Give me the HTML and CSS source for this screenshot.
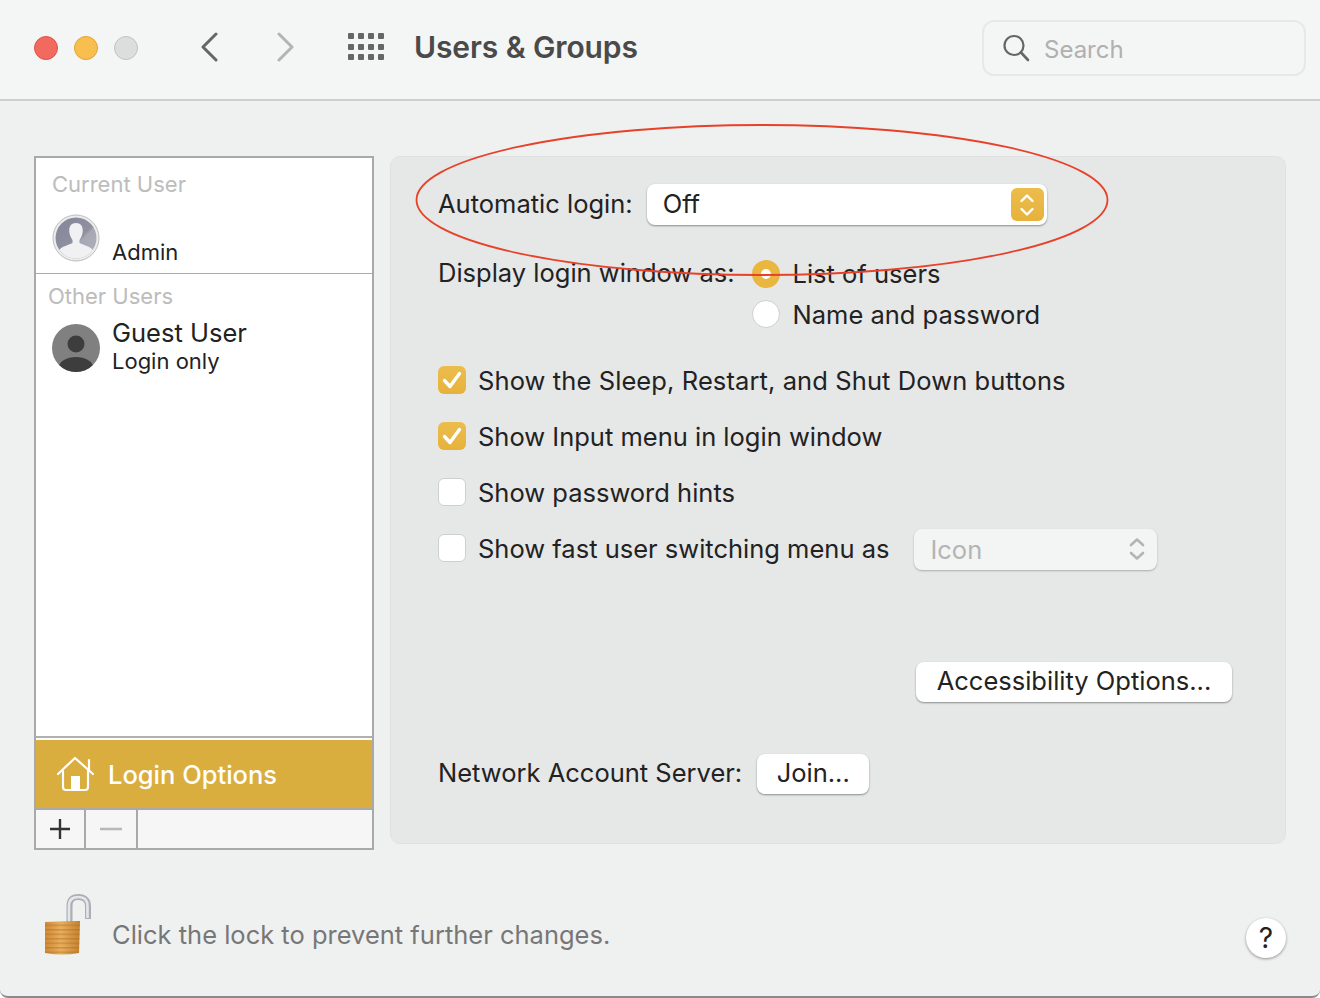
FILE: index.html
```html
<!DOCTYPE html>
<html lang="en">

<head>
  <meta charset="UTF-8">
  <title>Users &amp; Groups</title>
  <link rel="stylesheet" href="styles.css">
</head>

<body>
  <div class="window">

    <!-- toolbar -->
    <header class="toolbar">
      <div class="lights">
        <span class="light light-red"></span>
        <span class="light light-yellow"></span>
        <span class="light light-gray"></span>
      </div>
      <svg class="nav-arrow" width="20" height="30" viewBox="0 0 20 30"><path d="M16 2 L3 15 L16 28" fill="none" stroke="#666" stroke-width="3" stroke-linecap="round" stroke-linejoin="round" /></svg>
      <svg class="nav-arrow nav-next" width="20" height="30" viewBox="0 0 20 30"><path d="M4 2 L17 15 L4 28" fill="none" stroke="#b4b4b4" stroke-width="3" stroke-linecap="round" stroke-linejoin="round" /></svg>
      <div class="grid-icon">
        <i></i><i></i><i></i><i></i><i></i><i></i><i></i><i></i><i></i><i></i><i></i><i></i>
      </div>
      <h1 class="title">Users &amp; Groups</h1>
      <div class="search">
        <svg width="28" height="28" viewBox="0 0 28 28"><circle cx="12" cy="11.5" r="9.5" fill="none" stroke="#666" stroke-width="2.2" /><path d="M19 18.5 L26 26" stroke="#666" stroke-width="2.6" stroke-linecap="round" /></svg>
        <span class="search-text">Search</span>
      </div>
    </header>

    <main class="content">

      <!-- left list -->
      <aside class="sidebar">
        <section class="current-user">
          <div class="list-label">Current User</div>
          <div class="admin-row">
            <svg class="avatar" width="48" height="48" viewBox="0 0 48 48">
              <defs>
                <linearGradient id="adminBg" x1="0" y1="0" x2="1" y2="1">
                  <stop offset="0" stop-color="#84869a" />
                  <stop offset="0.55" stop-color="#8f91a0" />
                  <stop offset="0.6" stop-color="#a6a8b3" />
                  <stop offset="1" stop-color="#b0b2ba" />
                </linearGradient>
                <clipPath id="adminClip"><circle cx="24" cy="24" r="20.5" /></clipPath>
              </defs>
              <circle cx="24" cy="24" r="23" fill="#ececec" stroke="#bdbdbd" />
              <circle cx="24" cy="24" r="20.5" fill="url(#adminBg)" />
              <g clip-path="url(#adminClip)">
                <path d="M24 9 C18.5 9 16.5 13.5 17.5 19 C18 22 19.5 24.5 20.5 26 L20.5 29 C15 31.5 8 33 6 38 L6 48 L42 48 L42 38 C40 33 33 31.5 27.5 29 L27.5 26 C28.5 24.5 30 22 30.5 19 C31.5 13.5 29.5 9 24 9 Z" fill="#f1f1f3" />
              </g>
            </svg>
            <span class="admin-name">Admin</span>
          </div>
        </section>

        <section class="other-users">
          <div class="list-label">Other Users</div>
          <div class="guest-row">
            <svg class="avatar" width="48" height="48" viewBox="0 0 48 48">
              <defs><clipPath id="guestClip"><circle cx="24" cy="24" r="24" /></clipPath></defs>
              <circle cx="24" cy="24" r="24" fill="#808080" />
              <circle cx="24" cy="20" r="8.5" fill="#3d3d3d" />
              <g clip-path="url(#guestClip)"><ellipse cx="24" cy="43" rx="17" ry="10" fill="#3d3d3d" /></g>
            </svg>
            <div>
              <div class="guest-name">Guest User</div>
              <div class="guest-sub">Login only</div>
            </div>
          </div>
        </section>

        <div class="login-options">
          <svg width="40" height="36" viewBox="0 0 40 36">
            <path d="M2 18 L19 2 L37 18 M33 14 L33 4 M7 15 L7 31 Q7 34 10 34 L29 34 Q32 34 32 31 L32 15" fill="none" stroke="#fff" stroke-width="2.2" stroke-linecap="round" stroke-linejoin="round" />
            <rect x="15" y="20" width="9" height="14" fill="#fff" />
          </svg>
          <span>Login Options</span>
        </div>

        <div class="list-buttons">
          <div class="list-btn btn-add"><svg width="22" height="22" viewBox="0 0 22 22"><path d="M11 1 V21 M1 11 H21" stroke="#333" stroke-width="2.4" /></svg></div>
          <div class="list-btn btn-remove"><svg width="22" height="22" viewBox="0 0 22 22"><path d="M0 11 H22" stroke="#b8b8b8" stroke-width="2.4" /></svg></div>
        </div>
      </aside>

      <!-- right panel -->
      <section class="panel">
        <div class="row row-auto">
          <span class="auto-text">Automatic login:</span>
          <div class="popup popup-main">
            <span class="auto-text">Off</span>
            <span class="stepper">
              <svg width="16" height="26" viewBox="0 0 16 26"><path d="M2.5 9 L8 3.5 L13.5 9 M2.5 17 L8 22.5 L13.5 17" fill="none" stroke="#fff" stroke-width="2.4" stroke-linecap="round" stroke-linejoin="round" /></svg>
            </span>
          </div>
        </div>

        <div class="row row-display">
          <span class="display-label">Display login window as:</span>
          <div class="radios">
            <div class="radio-row radio-first"><span class="radio radio-on"></span><span>List of users</span></div>
            <div class="radio-row"><span class="radio"></span><span>Name and password</span></div>
          </div>
        </div>

        <div class="checks">
          <div class="check-row">
            <span class="check check-on"><svg width="20" height="18" viewBox="0 0 20 18"><path d="M2.5 9.5 L8 15.5 L17.5 2.5" fill="none" stroke="#fff" stroke-width="3.4" stroke-linecap="round" stroke-linejoin="round" /></svg></span>
            <span class="check-long">Show the Sleep, Restart, and Shut Down buttons</span>
          </div>
          <div class="check-row">
            <span class="check check-on"><svg width="20" height="18" viewBox="0 0 20 18"><path d="M2.5 9.5 L8 15.5 L17.5 2.5" fill="none" stroke="#fff" stroke-width="3.4" stroke-linecap="round" stroke-linejoin="round" /></svg></span>
            <span>Show Input menu in login window</span>
          </div>
          <div class="check-row">
            <span class="check"></span>
            <span>Show password hints</span>
          </div>
          <div class="check-row">
            <span class="check"></span>
            <span>Show fast user switching menu as</span>
            <div class="popup popup-icon">
              <span>Icon</span>
              <svg width="16" height="26" viewBox="0 0 16 26"><path d="M2 9 L8 3.5 L14 9 M2 17 L8 22.5 L14 17" fill="none" stroke="#b4b4b4" stroke-width="2.6" stroke-linecap="round" stroke-linejoin="round" /></svg>
            </div>
          </div>
        </div>

        <div class="access-row">
          <button class="btn btn-access">Accessibility Options...</button>
        </div>

        <div class="row row-join">
          <span class="join-label">Network Account Server:</span>
          <button class="btn btn-join">Join...</button>
        </div>
      </section>
    </main>

    <!-- bottom bar -->
    <footer class="footer">
      <svg class="lock" width="50" height="64" viewBox="0 0 50 64">
        <defs>
          <linearGradient id="lockBody" x1="0" y1="0" x2="1" y2="0">
            <stop offset="0" stop-color="#cf8a35" />
            <stop offset="0.45" stop-color="#e9ae5e" />
            <stop offset="1" stop-color="#c4822f" />
          </linearGradient>
          <pattern id="lockLines" width="4" height="4.5" patternUnits="userSpaceOnUse">
            <rect width="4" height="1.5" fill="#a5671f" opacity="0.4" />
          </pattern>
        </defs>
        <path d="M25.5 29 V13 C25.5 6 29 4 34.5 4 C40 4 44 7 44 13 V26" fill="none" stroke="#a9afb5" stroke-width="6" />
        <path d="M25 29 V13 C25 6 29 4 34.5 4 C40 4 43.5 7 43.5 13 V25" fill="none" stroke="#e4e7ea" stroke-width="2.6" />
        <path d="M1 29 L36 28 L35 60 Q18 63 1 60 Z" fill="url(#lockBody)" />
        <path d="M1 29 L36 28 L35 60 Q18 63 1 60 Z" fill="url(#lockLines)" />
      </svg>
      <span class="lock-text">Click the lock to prevent further changes.</span>
      <button class="help">?</button>
    </footer>

    <!-- red annotation -->
    <svg class="annotation" width="700" height="156" viewBox="0 0 700 156">
      <ellipse cx="347" cy="77" rx="345.5" ry="75" fill="none" stroke="#e8412a" stroke-width="1.8" />
    </svg>
  </div>
</body>

</html>
```

FILE: styles.css
```css
* {
  margin: 0;
  padding: 0;
  box-sizing: border-box;
}

body {
  background: #fff;
  font-family: Inter, "Noto Sans", sans-serif;
  font-size: 25.5px;
  color: #222;
}

.window {
  position: relative;
  width: 1320px;
  height: 998px;
  overflow: hidden;
  background: #eff0f0;
  border-bottom: 2px solid #8a8a8a;
  border-radius: 0 0 8px 8px;
}

/* toolbar */
.toolbar {
  display: flex;
  align-items: center;
  height: 101px;
  padding: 0 14px 6px 34px;
  background: #f4f5f5;
  border-bottom: 2px solid #cfcfcf;
}

.lights {
  display: flex;
  gap: 16px;
  margin: 2px 62px 0 0;
}

.light {
  width: 24px;
  height: 24px;
  border-radius: 50%;
  border: 1px solid;
}

.light-red {
  background: #f1695f;
  border-color: #dd5348;
}

.light-yellow {
  background: #f8bf4e;
  border-color: #e0a437;
}

.light-gray {
  background: #dcdddd;
  border-color: #c3c3c3;
}

.nav-arrow {
  margin-right: 55px;
}

.nav-next {
  margin-right: 53px;
}

.grid-icon {
  display: grid;
  grid-template-columns: repeat(4, 6px);
  grid-template-rows: repeat(3, 6px);
  gap: 4.5px 4px;
  margin-right: 30px;
}

.grid-icon i {
  background: #666;
  border-radius: 1px;
}

.title {
  font-size: 30px;
  font-weight: 600;
  color: #4a4a4a;
  letter-spacing: -0.1px;
}

.search {
  display: flex;
  align-items: center;
  gap: 14px;
  width: 324px;
  height: 56px;
  margin: 2px 0 0 auto;
  padding: 0 0 0 18px;
  border: 2px solid #e7e8e8;
  border-radius: 12px;
  color: #b0b0b0;
  font-size: 24px;
}

.search-text {
  margin-top: 4px;
}

/* main area */
.content {
  display: flex;
  align-items: flex-start;
  gap: 16px;
  padding: 55px 34px 0;
}

.sidebar {
  display: flex;
  flex-direction: column;
  flex: none;
  width: 340px;
  height: 694px;
  background: #fff;
  border: 2px solid #a9a9a9;
}

.list-label {
  color: #bcbcbc;
  font-size: 22px;
  line-height: 28px;
}

.current-user {
  height: 116px;
  padding: 12px 0 0 16px;
  border-bottom: 1px solid #a9a9a9;
}

.admin-row {
  display: flex;
  align-items: flex-end;
  gap: 12px;
  margin-top: 16px;
}

.admin-name {
  font-size: 22px;
  line-height: 28px;
  margin-bottom: -4px;
}

.other-users {
  flex: 1;
  padding: 8px 0 0 12px;
}

.guest-row {
  display: flex;
  align-items: center;
  gap: 12px;
  margin: 8px 0 0 4px;
}

.guest-name {
  font-size: 25.5px;
  line-height: 30px;
}

.guest-sub {
  padding-bottom: 3px;
  font-size: 22px;
  line-height: 27px;
}

.login-options {
  display: flex;
  align-items: center;
  gap: 12px;
  height: 70px;
  padding: 0 0 0 20px;
  background: #d9ad3e;
  color: #fff;
  border-top: 2px solid #fff;
  box-shadow: 0 -2px 0 #b0b0b0;
  font-weight: 500;
}

.list-buttons {
  display: flex;
  height: 40px;
  background: #f6f6f6;
  border-top: 2px solid #a9a9a9;
}

.list-btn {
  display: flex;
  align-items: center;
  justify-content: center;
  border-right: 2px solid #a9a9a9;
}

.btn-add {
  width: 50px;
}

.btn-remove {
  width: 52px;
}

/* right panel */
.panel {
  flex: none;
  width: 896px;
  height: 688px;
  padding: 27px 0 0 47px;
  background: #e6e7e7;
  border: 1px solid #e0e1e1;
  border-radius: 10px;
}

.row {
  display: flex;
  align-items: center;
}

.row-auto {
  gap: 14px;
}

.auto-text {
  padding-bottom: 2px;
}

.popup {
  display: flex;
  align-items: center;
  justify-content: space-between;
  height: 41px;
  border-radius: 8px;
}

.popup-main {
  width: 400px;
  padding: 0 3px 0 16px;
  background: #fff;
  box-shadow: 0 1px 2px rgba(0, 0, 0, 0.4);
}

.stepper {
  display: flex;
  align-items: center;
  justify-content: center;
  width: 33px;
  height: 33px;
  border-radius: 6px;
  background: linear-gradient(#ecbd4c, #e6b23c);
}

.row-display {
  align-items: flex-start;
  gap: 17px;
  margin-top: 27px;
}

.display-label {
  line-height: 42px;
}

.radios {
  display: flex;
  flex-direction: column;
}

.radio-row {
  display: flex;
  align-items: center;
  gap: 13px;
  height: 42px;
}

.radio-first {
  height: 41px;
  padding-top: 2px;
}

.radio {
  width: 28px;
  height: 28px;
  border-radius: 50%;
  background: #fff;
  border: 1px solid #cfcfcf;
}

.radio-on {
  border: 9px solid #e9b73f;
}

.checks {
  display: flex;
  flex-direction: column;
  gap: 14px;
  margin-top: 24px;
}

.check-row {
  display: flex;
  align-items: center;
  gap: 12px;
  height: 42px;
}

.check-long {
  letter-spacing: 0.1px;
}

.check {
  display: flex;
  align-items: center;
  justify-content: center;
  width: 28px;
  height: 28px;
  border-radius: 6px;
  background: #fff;
  border: 1px solid #cfcfcf;
}

.check-on {
  background: linear-gradient(#ecbd4c, #e6b23c);
  border: 0;
}

.popup-icon {
  width: 243px;
  margin: 2px 0 0 13px;
  padding: 0 12px 0 16px;
  background: #f3f4f4;
  color: #b4b4b4;
  box-shadow: 0 1px 2px rgba(0, 0, 0, 0.25);
}

.access-row {
  display: flex;
  margin: 93px 0 0 478px;
}

.btn {
  height: 40px;
  padding-bottom: 4px;
  background: #fff;
  border: 0;
  border-radius: 8px;
  box-shadow: 0 1px 2px rgba(0, 0, 0, 0.4);
  font: inherit;
  color: #222;
}

.btn-access {
  width: 316px;
}

.row-join {
  gap: 15px;
  margin-top: 52px;
}

.join-label {
  padding-bottom: 4px;
}

.btn-join {
  width: 112px;
}

/* bottom bar */
.footer {
  display: flex;
  align-items: center;
  height: 92px;
  margin-top: 30px;
  padding: 18px 34px 0 44px;
  color: #777;
}

.lock {
  margin-top: -20px;
}

.lock-text {
  margin: -2px 0 0 18px;
}

.help {
  width: 40px;
  height: 40px;
  margin: 6px 0 0 auto;
  border: 0;
  border-radius: 50%;
  background: #fff;
  box-shadow: 0 1px 3px rgba(0, 0, 0, 0.4);
  font: inherit;
  font-size: 28px;
  color: #222;
}

/* red ellipse lies over the panel */
.annotation {
  position: absolute;
  left: 415px;
  top: 123px;
  pointer-events: none;
}
```
